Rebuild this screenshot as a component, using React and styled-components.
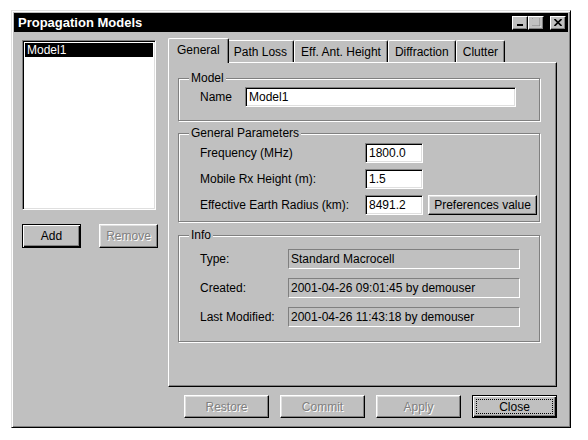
import styled, { createGlobalStyle, css } from "styled-components";

const GlobalStyle = createGlobalStyle`
  body {
    margin: 0;
    background: #fff;
    font-family: "Liberation Sans", Arial, sans-serif;
    font-size: 12px;
    color: #000;
  }
`;

const Page = styled.div`
  padding: 10px 0 0 11px;
`;

const Window = styled.div`
  width: 560px;
  height: 418px;
  box-sizing: border-box;
  background: #c0c0c0;
  border: 1px solid;
  border-color: #dfdfdf #000 #000 #dfdfdf;
  box-shadow: inset 1px 1px #fff, inset -1px -1px #808080;
  padding: 2px;
  display: flex;
  flex-direction: column;
`;

const TitleBar = styled.div`
  height: 19px;
  background: #000;
  color: #fff;
  display: flex;
  align-items: center;
  padding: 0 2px 0 4px;
  font-weight: bold;
  font-size: 13px;
`;

const TitleText = styled.div`
  flex: 1;
`;

const TitleButton = styled.div`
  width: 16px;
  height: 14px;
  box-sizing: border-box;
  background: #c0c0c0;
  border: 1px solid;
  border-color: #fff #000 #000 #fff;
  box-shadow: inset -1px -1px #808080;
  display: flex;
  align-items: center;
  justify-content: center;
  margin-left: ${(p) => p.$gap || 0}px;
`;

const Body = styled.div`
  display: flex;
  padding: 6px 10px 0 8px;
`;

const LeftCol = styled.div`
  width: 136px;
  margin-top: 2px;
  display: flex;
  flex-direction: column;
`;

const ListBox = styled.div`
  width: 134px;
  height: 170px;
  box-sizing: border-box;
  background: #fff;
  border: 1px solid;
  border-color: #808080 #fff #fff #808080;
  box-shadow: inset 1px 1px #000, inset -1px -1px #dfdfdf;
  padding: 2px;
`;

const ListItem = styled.div`
  height: 14px;
  line-height: 14px;
  padding-left: 2px;
  background: ${(p) => (p.$selected ? "#000" : "transparent")};
  color: ${(p) => (p.$selected ? "#fff" : "#000")};
`;

const ButtonRow = styled.div`
  display: flex;
  justify-content: ${(p) => p.$justify || "space-between"};
  gap: ${(p) => p.$gap || 0}px;
  margin-top: ${(p) => p.$top || 0}px;
`;

const Button = styled.button`
  width: ${(p) => p.$w || 85}px;
  height: ${(p) => p.$h || 23}px;
  box-sizing: border-box;
  padding: 0;
  font-family: "Liberation Sans", Arial, sans-serif;
  font-size: 12px;
  background: #c0c0c0;
  color: #000;
  border: 1px solid;
  border-color: #fff #000 #000 #fff;
  box-shadow: inset -1px -1px #808080, inset 1px 1px #dfdfdf;
  display: flex;
  align-items: center;
  justify-content: center;
  ${(p) =>
    p.$default &&
    css`
      border-color: #000;
      box-shadow: inset 1px 1px #fff, inset -1px -1px #000, inset -2px -2px #808080;
    `}
  &:disabled {
    color: #808080;
    text-shadow: 1px 1px #fff;
  }
`;

const FocusRing = styled.span`
  align-self: stretch;
  flex: 1;
  margin: 3px;
  border: 1px dotted #000;
  display: flex;
  align-items: center;
  justify-content: center;
`;

const RightCol = styled.div`
  width: 389px;
  margin-left: 10px;
  display: flex;
  flex-direction: column;
`;

const TabRow = styled.div`
  display: flex;
  align-items: flex-end;
  height: 24px;
  padding-left: 2px;
`;

const Tab = styled.div`
  height: 22px;
  box-sizing: border-box;
  padding: 0 6px;
  display: flex;
  align-items: center;
  background: #c0c0c0;
  border-left: 1px solid #fff;
  border-top: 1px solid #fff;
  border-right: 1px solid #000;
  box-shadow: inset -1px 0 #808080;
  border-radius: 2px 2px 0 0;
  ${(p) =>
    p.$active &&
    css`
      height: 25px;
      padding: 0 8px 2px;
      margin: 0 -2px -1px;
      position: relative;
      z-index: 1;
    `}
`;

const Panel = styled.div`
  height: 325px;
  box-sizing: border-box;
  border: 1px solid;
  border-color: #fff #000 #000 #fff;
  box-shadow: inset -1px -1px #808080;
  padding: 0 16px 0 9px;
  display: flex;
  flex-direction: column;
`;

const Group = styled.div`
  position: relative;
  margin-top: ${(p) => p.$top}px;
  border: 1px solid #808080;
  box-shadow: 1px 1px 0 #fff, inset 1px 1px 0 #fff;
  padding: ${(p) => p.$pad};
`;

const Caption = styled.span`
  position: absolute;
  top: -8px;
  left: 10px;
  padding: 0 2px;
  line-height: 14px;
  background: #c0c0c0;
`;

const NameRow = styled.div`
  display: flex;
  align-items: center;
`;

const Label = styled.span`
  width: ${(p) => p.$w || "auto"};
`;

const Input = styled.input`
  width: ${(p) => p.$w || "auto"};
  flex: ${(p) => (p.$grow ? 1 : "none")};
  height: 20px;
  box-sizing: border-box;
  border: 1px solid;
  border-color: #808080 #fff #fff #808080;
  box-shadow: inset 1px 1px #000, inset -1px -1px #dfdfdf;
  padding: 0 3px;
  font-family: "Liberation Sans", Arial, sans-serif;
  font-size: 12px;
  background: #fff;
  outline: none;
`;

const ParamGrid = styled.div`
  display: grid;
  grid-template-columns: 160px 58px 109px;
  column-gap: 5px;
  row-gap: 6px;
  align-items: center;
`;

const InfoGrid = styled.div`
  display: grid;
  grid-template-columns: 88px 232px;
  row-gap: 9px;
  align-items: center;
`;

const Field = styled.div`
  height: 20px;
  box-sizing: border-box;
  border: 1px solid;
  border-color: #808080 #fff #fff #808080;
  padding-left: 2px;
  line-height: 18px;
  white-space: nowrap;
`;

const tabs = ["General", "Path Loss", "Eff. Ant. Height", "Diffraction", "Clutter"];

const info = [
  ["Type:", "Standard Macrocell"],
  ["Created:", "2001-04-26 09:01:45 by demouser"],
  ["Last Modified:", "2001-04-26 11:43:18 by demouser"],
];

export default function App() {
  return (
    <Page>
      <GlobalStyle />
      <Window>
        <TitleBar>
          <TitleText>Propagation Models</TitleText>
          <TitleButton>
            <svg width="8" height="8" viewBox="0 0 8 8">
              <rect x="1" y="5" width="6" height="2" fill="#000" />
            </svg>
          </TitleButton>
          <TitleButton>
            <svg width="9" height="9" viewBox="0 0 9 9">
              <rect x="0.5" y="0.5" width="8" height="8" fill="none" stroke="#fff" />
              <rect x="0" y="0" width="8" height="8" fill="none" stroke="#808080" strokeWidth="1" />
            </svg>
          </TitleButton>
          <TitleButton $gap={6}>
            <svg width="8" height="7" viewBox="0 0 8 7">
              <path d="M0.5 0 L7.5 7 M7.5 0 L0.5 7" stroke="#000" strokeWidth="1.6" />
            </svg>
          </TitleButton>
        </TitleBar>
        <Body>
          <LeftCol>
            <ListBox>
              <ListItem $selected>Model1</ListItem>
            </ListBox>
            <ButtonRow $top={14}>
              <Button $w={59} $h={24} $default>Add</Button>
              <Button $w={59} $h={24} disabled>Remove</Button>
            </ButtonRow>
          </LeftCol>
          <RightCol>
            <TabRow>
              {tabs.map((t, i) => (
                <Tab key={t} $active={i === 0}>{t}</Tab>
              ))}
            </TabRow>
            <Panel>
              <Group $top={15} $pad="8px 23px 13px 21px">
                <Caption>Model</Caption>
                <NameRow>
                  <Label $w="45px">Name</Label>
                  <Input $grow defaultValue="Model1" />
                </NameRow>
              </Group>
              <Group $top={12} $pad="9px 10px 6px 21px">
                <Caption>General Parameters</Caption>
                <ParamGrid>
                  <Label>Frequency (MHz)</Label>
                  <Input $w="58px" defaultValue="1800.0" />
                  <span />
                  <Label>Mobile Rx Height (m):</Label>
                  <Input $w="58px" defaultValue="1.5" />
                  <span />
                  <Label>Effective Earth Radius (km):</Label>
                  <Input $w="58px" defaultValue="8491.2" />
                  <Button $w={109} $h={20}>Preferences value</Button>
                </ParamGrid>
              </Group>
              <Group $top={13} $pad="13px 10px 14px 21px">
                <Caption>Info</Caption>
                <InfoGrid>
                  {info.map(([k, v]) => [
                    <Label key={k}>{k}</Label>,
                    <Field key={k + "v"}>{v}</Field>,
                  ])}
                </InfoGrid>
              </Group>
            </Panel>
            <ButtonRow $top={8} $justify="flex-end" $gap={11}>
              <Button disabled>Restore</Button>
              <Button disabled>Commit</Button>
              <Button disabled>Apply</Button>
              <Button $default>
                <FocusRing>Close</FocusRing>
              </Button>
            </ButtonRow>
          </RightCol>
        </Body>
      </Window>
    </Page>
  );
}
